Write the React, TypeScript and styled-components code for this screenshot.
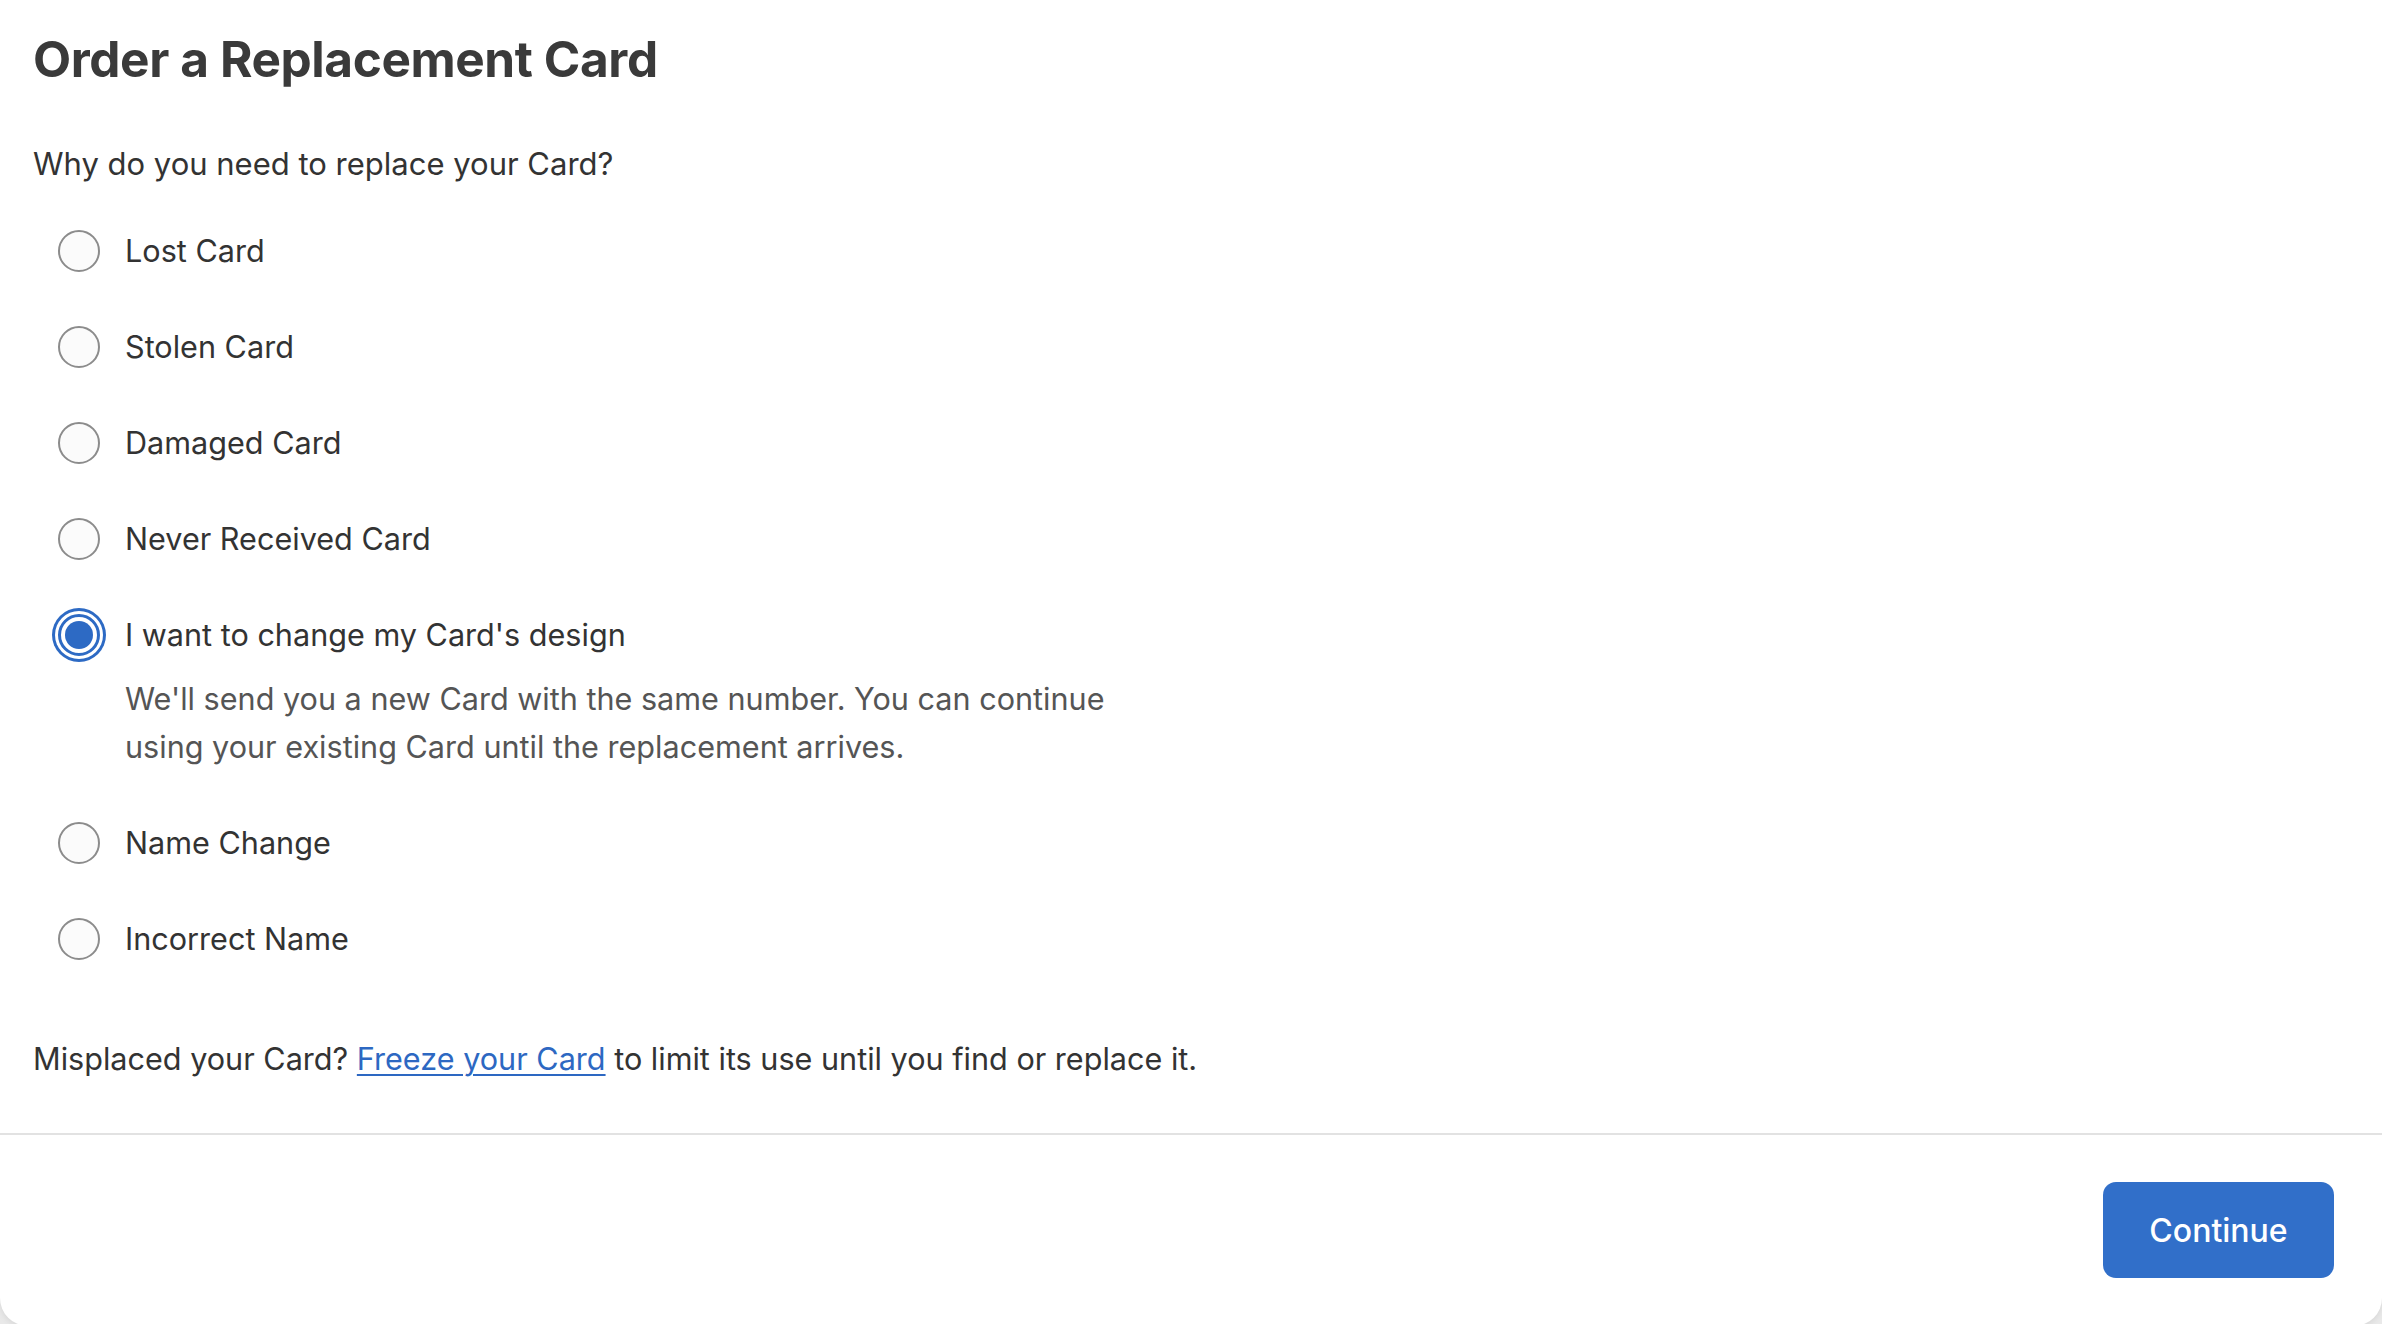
import React, { useState } from "react";
import styled, { createGlobalStyle } from "styled-components";

const GlobalStyle = createGlobalStyle`
  html, body {
    margin: 0;
    padding: 0;
    background: #e9e9e9;
  }
  body {
    font-family: Inter, "Noto Sans", "Liberation Sans", sans-serif;
    color: #333333;
  }
`;

const Panel = styled.div`
  min-height: 100vh;
  box-sizing: border-box;
  background: #ffffff;
  border-radius: 0 0 28px 28px;
  box-shadow: 0 2px 6px rgba(0, 0, 0, 0.08);
  display: flex;
  flex-direction: column;
`;

const Body = styled.main`
  padding: 27px 33px 50px;
  display: flex;
  flex-direction: column;
`;

const Title = styled.h1`
  margin: 0;
  font-size: 49.5px;
  line-height: 64px;
  font-weight: 700;
  letter-spacing: -0.4px;
  color: #3a3a3a;
`;

const Question = styled.p`
  margin: 53px 0 19px;
  font-size: 31px;
  line-height: 40px;
  color: #333333;
`;

const Options = styled.div`
  display: flex;
  flex-direction: column;
`;

const Option = styled.label`
  display: flex;
  flex-direction: column;
  padding: 24px 0;
  cursor: pointer;
`;

const OptionRow = styled.div`
  display: flex;
  align-items: center;
  gap: 25px;
  padding-left: 25px;
`;

const HiddenInput = styled.input`
  position: absolute;
  opacity: 0;
  width: 0;
  height: 0;
`;

const Radio = styled.span<{ $checked: boolean }>`
  box-sizing: border-box;
  flex: none;
  width: 42px;
  height: 42px;
  border-radius: 50%;
  display: flex;
  align-items: center;
  justify-content: center;
  background: ${({ $checked }) => ($checked ? "#ffffff" : "#fbfbfb")};
  border: ${({ $checked }) => ($checked ? "3px solid #2d6ac4" : "2px solid #8c8c8c")};
  box-shadow: ${({ $checked }) =>
    $checked ? "0 0 0 3px #ffffff, 0 0 0 6px #2d6ac4" : "none"};

  &::after {
    content: "";
    display: ${({ $checked }) => ($checked ? "block" : "none")};
    width: 28px;
    height: 28px;
    border-radius: 50%;
    background: #2d6ac4;
  }
`;

const Label = styled.span`
  font-size: 30.6px;
  line-height: 48px;
  color: #333333;
`;

const Description = styled.p`
  margin: 16px 0 0 92px;
  max-width: 1000px;
  font-size: 30.6px;
  line-height: 48px;
  color: #555555;
`;

const Note = styled.p`
  margin: 48px 0 0;
  font-size: 30.6px;
  line-height: 48px;
  color: #333333;
`;

const NoteLink = styled.a`
  color: #2d68c2;
  text-decoration: underline;
  text-underline-offset: 4px;
  text-decoration-thickness: 2px;
`;

const Footer = styled.footer`
  border-top: 2px solid #e2e2e2;
  padding: 47px 48px 48px;
  display: flex;
  justify-content: flex-end;
`;

const Button = styled.button`
  width: 231px;
  height: 96px;
  border: none;
  border-radius: 13px;
  background: #316fc9;
  color: #ffffff;
  font-family: Inter, "Noto Sans", "Liberation Sans", sans-serif;
  font-size: 32px;
  font-weight: 500;
  cursor: pointer;
`;

const reasons = [
  { id: "lost", label: "Lost Card" },
  { id: "stolen", label: "Stolen Card" },
  { id: "damaged", label: "Damaged Card" },
  { id: "never", label: "Never Received Card" },
  {
    id: "design",
    label: "I want to change my Card's design",
    description:
      "We'll send you a new Card with the same number. You can continue using your existing Card until the replacement arrives.",
  },
  { id: "name", label: "Name Change" },
  { id: "incorrect", label: "Incorrect Name" },
];

export default function App() {
  const [selected, setSelected] = useState("design");

  return (
    <>
      <GlobalStyle />
      <Panel>
        <Body>
          <Title>Order a Replacement Card</Title>
          <Question>Why do you need to replace your Card?</Question>
          <Options role="radiogroup">
            {reasons.map((r) => {
              const checked = selected === r.id;
              return (
                <Option key={r.id}>
                  <OptionRow>
                    <HiddenInput
                      type="radio"
                      name="reason"
                      checked={checked}
                      onChange={() => setSelected(r.id)}
                    />
                    <Radio $checked={checked} aria-hidden="true" />
                    <Label>{r.label}</Label>
                  </OptionRow>
                  {checked && r.description && <Description>{r.description}</Description>}
                </Option>
              );
            })}
          </Options>
          <Note>
            Misplaced your Card? <NoteLink href="#">Freeze your Card</NoteLink> to limit its use
            until you find or replace it.
          </Note>
        </Body>
        <Footer>
          <Button type="button">Continue</Button>
        </Footer>
      </Panel>
    </>
  );
}
